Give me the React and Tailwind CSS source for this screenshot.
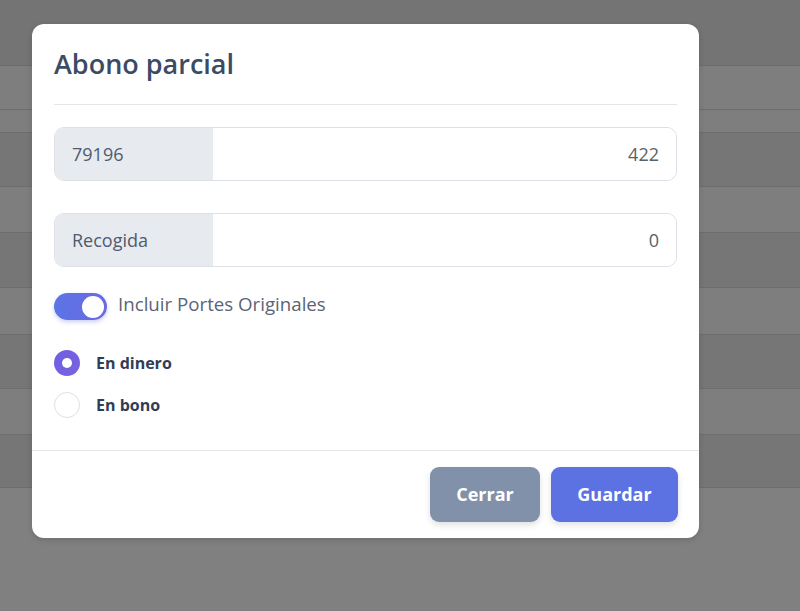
import React from "react";

const rows = [
  { h: "h-[44px]", c: "bg-[#7e7e7e]" },
  { h: "h-[23px]", c: "bg-[#7e7e7e]" },
  { h: "h-[54px]", c: "bg-[#767677]" },
  { h: "h-[46px]", c: "bg-[#7e7e7e]" },
  { h: "h-[55px]", c: "bg-[#767677]" },
  { h: "h-[47px]", c: "bg-[#7e7e7e]" },
  { h: "h-[54px]", c: "bg-[#767677]" },
  { h: "h-[46px]", c: "bg-[#7e7e7e]" },
  { h: "h-[53px]", c: "bg-[#767677]" },
];

function InputGroup({ label, value }) {
  return (
    <div className="flex h-[54px] rounded-[10px] border border-[#dde0e6] overflow-hidden">
      <div className="w-[158px] bg-[#e7eaee] flex items-center pl-[17px] text-[18px] text-[#4f5b6e]">
        {label}
      </div>
      <div className="flex-1 bg-white flex items-center justify-end pr-[17px] text-[18px] text-[#5c6068]">
        {value}
      </div>
    </div>
  );
}

export default function App() {
  return (
    <div
      className="relative w-[800px] h-[611px] overflow-hidden bg-[#808080]"
      style={{ fontFamily: '"Open Sans", "Noto Sans", sans-serif' }}
    >
      <div className="h-[66px] bg-[#747475] border-b border-[#6d6d6f]" />
      {rows.map((r, i) => (
        <div key={i} className={`${r.h} ${r.c} border-b border-[#6e6e70]`} />
      ))}

      <div className="absolute left-[32px] top-[24px] w-[667px] rounded-[12px] bg-white shadow-[0_2px_6px_rgba(0,0,0,0.15)]">
        <div className="mx-[22px] pt-[22px] pb-[22px] border-b border-[#e2e5ea]">
          <h1 className="text-[27px] leading-[36px] font-semibold text-[#3c4b64]">
            Abono parcial
          </h1>
        </div>

        <div className="px-[22px] pt-[22px] pb-[32px]">
          <InputGroup label="79196" value="422" />
          <div className="mt-[32px]">
            <InputGroup label="Recogida" value="0" />
          </div>

          <div className="mt-[26px] flex items-center gap-[11px]">
            <div className="w-[53px] h-[27px] rounded-full bg-gradient-to-r from-[#5b74e6] to-[#6a69e2] flex items-center justify-end pr-[3px] shadow-[0_2px_4px_rgba(91,114,230,0.35)]">
              <div className="w-[22px] h-[22px] rounded-full bg-white" />
            </div>
            <span className="text-[18.7px] text-[#5b6477] leading-[24px] -mt-[6px]">
              Incluir Portes Originales
            </span>
          </div>

          <div className="mt-[30px] flex items-center gap-[16px]">
            <div className="w-[26px] h-[26px] rounded-full bg-gradient-to-br from-[#6f5fe3] to-[#7a63de] flex items-center justify-center">
              <div className="w-[10px] h-[10px] rounded-full bg-white" />
            </div>
            <span className="text-[16px] font-bold text-[#2f3d59] -mt-[1px]">En dinero</span>
          </div>
          <div className="mt-[16px] flex items-center gap-[16px]">
            <div className="w-[26px] h-[26px] rounded-full bg-white border border-[#dcdfe5]" />
            <span className="text-[16px] font-bold text-[#2f3d59]">En bono</span>
          </div>
        </div>

        <div className="border-t border-[#e3e6eb] px-[21px] pt-[16px] pb-[16px] flex justify-end gap-[11px]">
          <button className="w-[110px] h-[55px] rounded-[9px] bg-[#8191aa] text-white text-[18px] font-bold shadow-[0_3px_6px_rgba(0,0,0,0.12)]">
            Cerrar
          </button>
          <button className="w-[127px] h-[55px] rounded-[9px] bg-[#5c72e3] text-white text-[18px] font-bold shadow-[0_3px_6px_rgba(0,0,0,0.12)]">
            Guardar
          </button>
        </div>
      </div>
    </div>
  );
}
